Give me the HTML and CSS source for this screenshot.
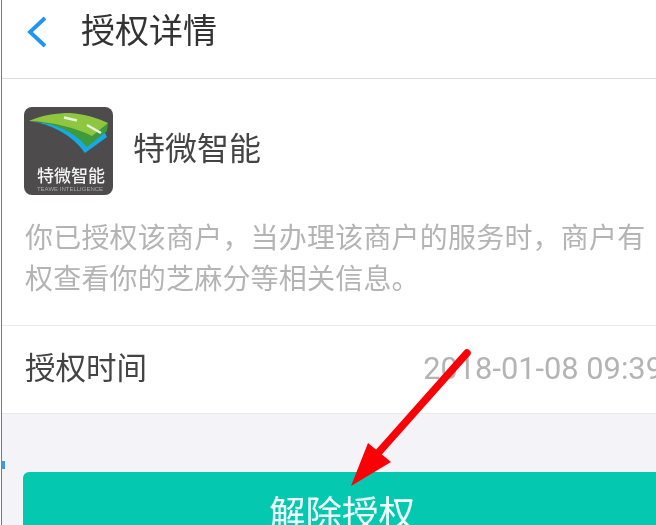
FILE: index.html
```html
<!DOCTYPE html>
<html lang="zh">
<head>
<meta charset="utf-8">
<title>授权详情</title>
<link rel="stylesheet" href="styles.css">
</head>
<body>
<div class="page">
  <header class="nav">
    <svg class="back" width="24" height="34" viewBox="0 0 24 34"><path d="M20 3 L5 17 L20 31" fill="none" stroke="#1e95ee" stroke-width="3.8"/></svg>
    <h1 class="title">授权详情</h1>
  </header>
  <section class="merchant">
    <div class="merchant-head">
      <div class="logo">
        <svg class="road" width="89" height="50" viewBox="0 0 89 50">
          <path d="M5 14 C28 17 48 28 61 46 L83 30 L80 24 Z" fill="#16a9e2"/>
          <path d="M5 14 C32 16 51 25 63 40 L83 24 L84 16 Z" fill="#3f9a3d"/>
          <path d="M5 14 C18 8 33 6 46 6 C60 7 74 11 84 16 L68 29 C52 21 30 15 5 14 Z" fill="#8fc63f"/>
          <path d="M40 10.500 L53 13.500 M63 18 L77 26" stroke="#e9f2dc" stroke-width="2.400" fill="none"/>
        </svg>
        <span class="logo-name">特微智能</span>
        <span class="logo-sub">TEAWE INTELLIGENCE</span>
      </div>
      <span class="merchant-name">特微智能</span>
    </div>
    <p class="desc">你已授权该商户，当办理该商户的服务时，商户有<br>权查看你的芝麻分等相关信息。</p>
  </section>
  <section class="row">
    <span class="row-label">授权时间</span>
    <span class="row-value">2018-01-08 09:39</span>
  </section>
  <div class="footer">
    <button class="action">解除授权</button>
  </div>
  <span class="edge-mark"></span>
  <svg class="arrow" width="656" height="525" viewBox="0 0 656 525">
    <path d="M467 353 L379 452" stroke="#fb0006" stroke-width="7.500" stroke-linecap="round" fill="none"/>
    <path d="M351 486 L368 443 L391 462 Z" fill="#fb0006"/>
  </svg>
</div>
</body>
</html>
```
FILE: styles.css
```css
html, body {
  margin: 0;
  padding: 0;
  background: #fff;
}
.page {
  position: relative;
  width: 656px;
  height: 525px;
  overflow: hidden;
  background: #f3f3f8;
  font-family: "Noto Sans CJK SC", "Noto Sans", sans-serif;
  border-left: 1px solid #fff;
  box-sizing: border-box;
  filter: blur(0.4px);
}
.page::before {
  content: "";
  position: absolute;
  left: 0;
  top: 0;
  bottom: 0;
  width: 1px;
  background: #4a7be0;
  z-index: 2;
}
.nav {
  height: 79px;
  box-sizing: border-box;
  display: flex;
  align-items: center;
  padding: 0 0 14px 24px;
  background: #fff;
  border-bottom: 1px solid #dcdcdc;
}
.back {
  flex: none;
}
.title {
  margin: 0 0 6px 32px;
  font-size: 34px;
  font-weight: 400;
  line-height: 44px;
  color: #333;
}
.merchant {
  height: 247px;
  box-sizing: border-box;
  background: #fff;
  border-bottom: 1px solid #eaeaea;
  padding: 28px 0 0 23px;
}
.merchant-head {
  display: flex;
  align-items: center;
}
.logo {
  flex: none;
  width: 89px;
  height: 88px;
  border-radius: 8px;
  background: #4d4b4b;
  display: flex;
  flex-direction: column;
  align-items: center;
  overflow: hidden;
}
.road {
  display: block;
  flex: none;
}
.logo-name {
  margin: 8px 0 0 5px;
  font-size: 17px;
  font-weight: 500;
  line-height: 20px;
  color: #f2f2f2;
  white-space: nowrap;
}
.logo-sub {
  margin-left: 3px;
  font-family: "Liberation Sans", sans-serif;
  font-size: 6px;
  line-height: 8px;
  color: #a9a9a9;
  white-space: nowrap;
}
.merchant-name {
  margin: 0 0 10px 20px;
  font-size: 32px;
  line-height: 44px;
  color: #444;
}
.desc {
  margin: 21px 0 0 1px;
  font-size: 28px;
  letter-spacing: 0.2px;
  line-height: 41px;
  color: #b4b4b4;
  white-space: nowrap;
}
.row {
  height: 88px;
  box-sizing: border-box;
  display: flex;
  align-items: center;
  justify-content: space-between;
  background: #fff;
  border-bottom: 1px solid #eaeaea;
  padding: 0 0 2px 24px;
  white-space: nowrap;
  overflow: hidden;
}
.row-label {
  margin-bottom: 6px;
  font-size: 30.500px;
  line-height: 44px;
  color: #444;
}
.row-value {
  flex: none;
  font-family: Roboto, sans-serif;
  font-size: 30.800px;
  line-height: 44px;
  color: #b4b4b4;
  margin-right: -7px;
}
.footer {
  padding: 58px 0 0 22px;
}
.action {
  display: block;
  width: 638px;
  height: 80px;
  border: 0;
  border-radius: 6px;
  padding: 0;
  background: #04c9b0;
  color: #f4fffd;
  font-family: inherit;
  font-size: 36.500px;
  line-height: 60px;
  text-align: center;
}
.edge-mark {
  position: absolute;
  left: -1px;
  top: 461px;
  width: 5px;
  height: 8px;
  background: #3f9ad6;
  z-index: 3;
}
.arrow {
  position: absolute;
  left: -1px;
  top: 0;
  z-index: 4;
}
```
